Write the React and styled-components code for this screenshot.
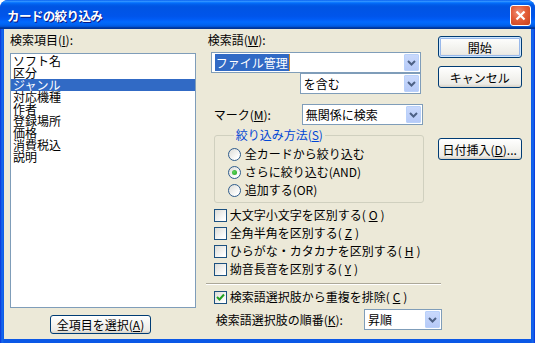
import styled, { createGlobalStyle } from "styled-components";

const Global = createGlobalStyle`
  html, body {
    margin: 0;
    padding: 0;
    background: #ffffff;
  }
  * {
    box-sizing: border-box;
  }
`;

const Ventana = styled.div`
  width: 535px;
  height: 343px;
  display: flex;
  flex-direction: column;
  border-radius: 8px 8px 0 0;
  overflow: hidden;
  background: linear-gradient(90deg, #0831d9 0px, #166aee 2px, #0b58e6 4px, #0b58e6 531px, #166aee 533px, #0831d9 535px);
  font-family: "Noto Sans CJK JP", sans-serif;
  font-size: 12px;
  color: #000;
`;

const BarraTitulo = styled.div`
  height: 29px;
  flex: none;
  display: flex;
  align-items: center;
  justify-content: space-between;
  padding: 1px 4px 0 7px;
  background: linear-gradient(
    180deg,
    #0058ee 0%,
    #3593ff 4%,
    #288eff 6%,
    #127dff 8%,
    #036ffc 10%,
    #0262ee 14%,
    #0057e5 20%,
    #0054e3 24%,
    #0055eb 56%,
    #005bf5 66%,
    #026afe 76%,
    #0062ef 86%,
    #0052d6 92%,
    #0040ab 94%,
    #003092 100%
  );
`;

const Titulo = styled.span`
  color: #fff;
  font-weight: 700;
  font-size: 12.5px;
  letter-spacing: -0.6px;
  text-shadow: 1px 1px 0 #0a1883;
`;

const BotonCerrar = styled.span`
  width: 21px;
  height: 21px;
  border: 1px solid #fff;
  border-radius: 3px;
  display: flex;
  align-items: center;
  justify-content: center;
  background: radial-gradient(circle at 40% 35%, #f0917a 0%, #e35d38 45%, #c7401c 100%);
`;

const Cuerpo = styled.div`
  flex: 1;
  margin: 0 4px 4px 4px;
  background: #ece9d8;
  display: flex;
  padding: 5px 0 0 6px;
`;

const ColumnaIzq = styled.div`
  width: 186px;
  display: flex;
  flex-direction: column;
`;

const Etiqueta = styled.div`
  height: 12px;
  line-height: 12px;
  margin-left: ${(p) => p.$izq || 0}px;
  white-space: nowrap;
  u {
    text-decoration: underline;
  }
`;

const Lista = styled.div`
  margin-top: 7px;
  height: 255px;
  border: 1px solid #7f9db9;
  background: #fff;
  padding: 1px 0 0 0;
`;

const Item = styled.div`
  height: 12px;
  line-height: 12px;
  padding-left: 2px;
  white-space: nowrap;
  background: ${(p) => (p.$sel ? "#316ac5" : "transparent")};
  color: ${(p) => (p.$sel ? "#fff" : "#000")};
`;

const Boton = styled.div`
  width: ${(p) => p.$ancho || 84}px;
  height: ${(p) => p.$alto || 22}px;
  margin-top: ${(p) => p.$arriba || 0}px;
  margin-left: ${(p) => p.$izq || 0}px;
  border: 1px solid #003c74;
  border-radius: 3px;
  display: flex;
  align-items: center;
  justify-content: center;
  white-space: nowrap;
  background: linear-gradient(180deg, #ffffff 0%, #f6f6f3 40%, #ecebe6 85%, #d6d0c5 100%);
  box-shadow: ${(p) =>
    p.$defecto ? "inset 0 0 0 1px #cee7ff, inset 0 0 0 2px #98b8ea" : "none"};
  u {
    text-decoration: underline;
  }
`;

const ColumnaDer = styled.div`
  margin-left: 10px;
  width: 326px;
  display: flex;
  flex-direction: column;
`;

const FilaSuperior = styled.div`
  display: flex;
`;

const Medio = styled.div`
  width: 225px;
  display: flex;
  flex-direction: column;
`;

const ColumnaBotones = styled.div`
  margin-left: 7px;
  padding-top: 2px;
  display: flex;
  flex-direction: column;
`;

const Combo = styled.div`
  width: ${(p) => p.$ancho}px;
  height: 21px;
  flex: none;
  margin-top: ${(p) => p.$arriba || 0}px;
  margin-left: ${(p) => p.$izq || 0}px;
  border: 1px solid #7f9db9;
  background: #fff;
  display: flex;
  align-items: center;
  padding: 0 1px 0 3px;
`;

const ComboTexto = styled.span`
  flex: 1;
  line-height: 15px;
  white-space: nowrap;
`;

const Resaltado = styled.span`
  background: #316ac5;
  color: #fff;
  padding: 0 1px;
  border-right: 1px solid #d08a2c;
`;

const Flecha = styled.span`
  width: 15px;
  height: 17px;
  flex: none;
  border: 1px solid #b9d1fa;
  border-radius: 1px;
  background: linear-gradient(180deg, #c9d9fc 0%, #b6caf8 100%);
  display: flex;
  align-items: center;
  justify-content: center;
`;

const FilaMarca = styled.div`
  display: flex;
  align-items: center;
  margin-top: 10px;
`;

const Grupo = styled.fieldset`
  width: 210px;
  margin: 4px 0 0 8px;
  padding: 4px 0 3px 13px;
  border: 1px solid #d0d0bf;
  border-radius: 3px;
  min-width: 0;
  legend {
    padding: 0 2px;
    margin-left: 6px;
    color: #0046d5;
    line-height: 12px;
    height: 12px;
    u {
      text-decoration: underline;
    }
  }
`;

const FilaOpcion = styled.div`
  height: ${(p) => p.$alto || 18}px;
  display: flex;
  align-items: center;
  gap: ${(p) => p.$hueco || 4}px;
  margin-left: ${(p) => p.$izq || 0}px;
  white-space: nowrap;
  line-height: 14px;
  u {
    text-decoration: underline;
  }
`;

const Radio = styled.span`
  width: 13px;
  height: 13px;
  border-radius: 50%;
  border: 1px solid #2f5c8c;
  background: linear-gradient(135deg, #dcdcd7 0%, #ffffff 80%);
  display: flex;
  align-items: center;
  justify-content: center;
  flex: none;
  &::after {
    content: "";
    width: 5px;
    height: 5px;
    border-radius: 50%;
    background: radial-gradient(circle at 40% 40%, #5fd65b 0%, #21a121 100%);
    display: ${(p) => (p.$activo ? "block" : "none")};
  }
`;

const Casilla = styled.span`
  width: 13px;
  height: 13px;
  border: 1px solid #1c5180;
  background: linear-gradient(135deg, #dcdcd7 0%, #ffffff 85%);
  display: flex;
  align-items: center;
  justify-content: center;
  flex: none;
`;

const Casillas = styled.div`
  margin-top: 3px;
  display: flex;
  flex-direction: column;
`;

const Separador = styled.div`
  width: 235px;
  height: 2px;
  margin-top: 5px;
  border-top: 1px solid #aca899;
  border-bottom: 1px solid #fff;
`;

const FilaOrden = styled.div`
  display: flex;
  align-items: center;
  margin-top: 3px;
  margin-left: 10px;
  u {
    text-decoration: underline;
  }
`;

const items = ["ソフト名", "区分", "ジャンル", "対応機種", "作者", "登録場所", "価格", "消費税込", "説明"];

const Chevron = () => (
  <svg width="9" height="6" viewBox="0 0 9 6">
    <path d="M1 1 L4.5 4.5 L8 1" fill="none" stroke="#4d6185" strokeWidth="2" />
  </svg>
);

const Desplegable = ({ ancho, arriba, izq, children }) => (
  <Combo $ancho={ancho} $arriba={arriba} $izq={izq}>
    <ComboTexto>{children}</ComboTexto>
    <Flecha>
      <Chevron />
    </Flecha>
  </Combo>
);

const Check = ({ marcado }) => (
  <Casilla>
    {marcado && (
      <svg width="9" height="9" viewBox="0 0 9 9">
        <path d="M1 4 L3.5 6.5 L8 1.5" fill="none" stroke="#21a121" strokeWidth="2" />
      </svg>
    )}
  </Casilla>
);

export default function App() {
  return (
    <>
      <Global />
      <Ventana>
        <BarraTitulo>
          <Titulo>カードの絞り込み</Titulo>
          <BotonCerrar>
            <svg width="11" height="11" viewBox="0 0 11 11">
              <path d="M1.5 1.5 L9.5 9.5 M9.5 1.5 L1.5 9.5" stroke="#fff" strokeWidth="2.2" />
            </svg>
          </BotonCerrar>
        </BarraTitulo>
        <Cuerpo>
          <ColumnaIzq>
            <Etiqueta>
              検索項目(<u>I</u>):
            </Etiqueta>
            <Lista>
              {items.map((t, i) => (
                <Item key={t} $sel={i === 2}>
                  {t}
                </Item>
              ))}
            </Lista>
            <Boton $ancho={101} $alto={19} $arriba={7} $izq={40}>
              全項目を選択(<u>A</u>)
            </Boton>
          </ColumnaIzq>
          <ColumnaDer>
            <FilaSuperior>
              <Medio>
                <Etiqueta $izq={2}>
                  検索語(<u>W</u>):
                </Etiqueta>
                <Desplegable ancho={210} arriba={6} izq={5}>
                  <Resaltado>ファイル管理</Resaltado>
                </Desplegable>
                <Desplegable ancho={121} izq={94}>
                  を含む
                </Desplegable>
                <FilaMarca>
                  <Etiqueta $izq={8}>
                    マーク(<u>M</u>):
                  </Etiqueta>
                  <Desplegable ancho={121} izq={31}>
                    無関係に検索
                  </Desplegable>
                </FilaMarca>
                <Grupo>
                  <legend>
                    絞り込み方法(<u>S</u>)
                  </legend>
                  <FilaOpcion>
                    <Radio />
                    全カードから絞り込む
                  </FilaOpcion>
                  <FilaOpcion>
                    <Radio $activo />
                    さらに絞り込む(AND)
                  </FilaOpcion>
                  <FilaOpcion>
                    <Radio />
                    追加する(OR)
                  </FilaOpcion>
                </Grupo>
                <Casillas>
                  <FilaOpcion $izq={8} $hueco={3}>
                    <Check />
                    大文字小文字を区別する(<u>O</u>)
                  </FilaOpcion>
                  <FilaOpcion $izq={8} $hueco={3}>
                    <Check />
                    全角半角を区別する(<u>Z</u>)
                  </FilaOpcion>
                  <FilaOpcion $izq={8} $hueco={3}>
                    <Check />
                    ひらがな・カタカナを区別する(<u>H</u>)
                  </FilaOpcion>
                  <FilaOpcion $izq={8} $hueco={3}>
                    <Check />
                    拗音長音を区別する(<u>Y</u>)
                  </FilaOpcion>
                </Casillas>
              </Medio>
              <ColumnaBotones>
                <Boton $defecto>開始</Boton>
                <Boton $arriba={8}>キャンセル</Boton>
                <Boton $arriba={50}>
                  日付挿入(<u>D</u>)...
                </Boton>
              </ColumnaBotones>
            </FilaSuperior>
            <Separador />
            <Casillas>
              <FilaOpcion $izq={8} $hueco={3}>
                <Check marcado />
                検索語選択肢から重複を排除(<u>C</u>)
              </FilaOpcion>
            </Casillas>
            <FilaOrden>
              <Etiqueta>
                検索語選択肢の順番(<u>K</u>):
              </Etiqueta>
              <Desplegable ancho={78} izq={21}>
                昇順
              </Desplegable>
            </FilaOrden>
          </ColumnaDer>
        </Cuerpo>
      </Ventana>
    </>
  );
}
